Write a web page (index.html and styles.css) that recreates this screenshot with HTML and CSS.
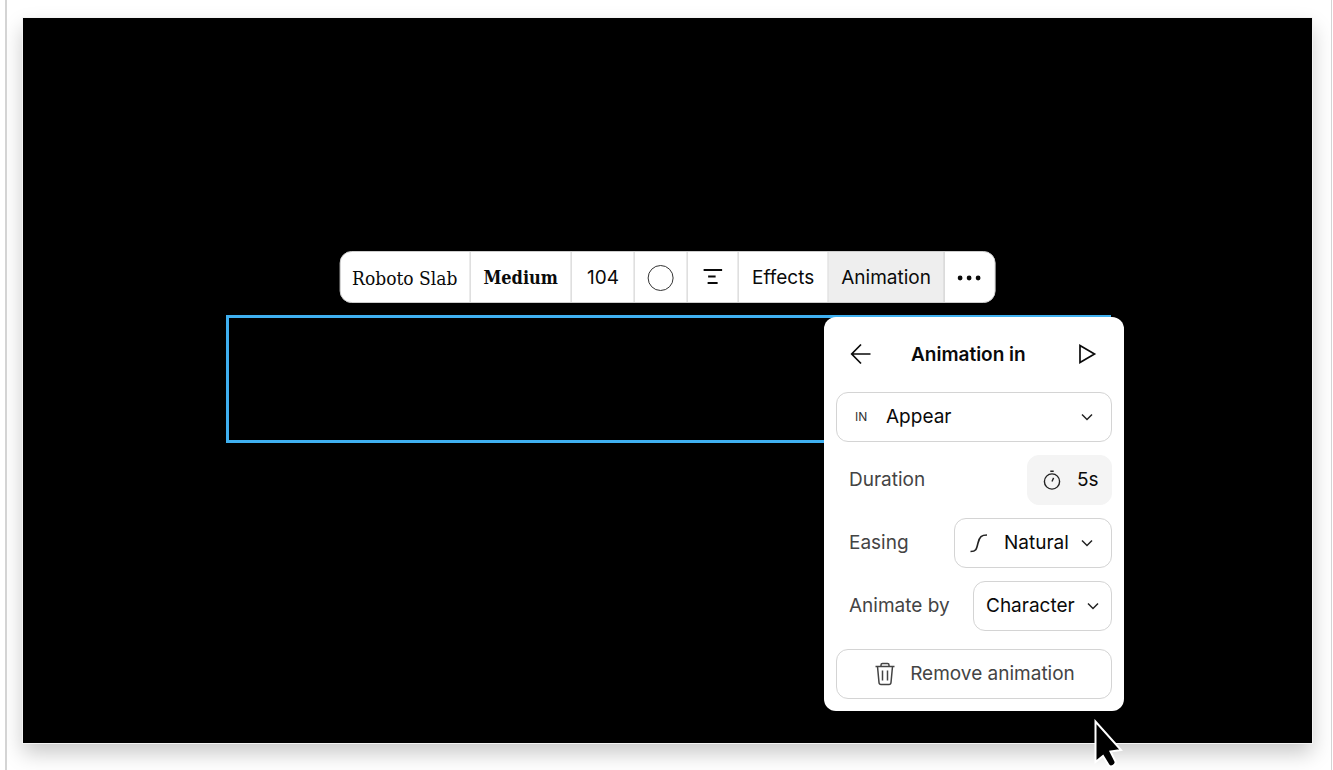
FILE: index.html
```html
<!DOCTYPE html>
<html lang="en">
<head>
<meta charset="utf-8">
<title>Animation editor</title>
<link rel="stylesheet" href="styles.css">
</head>
<body>
<main class="workspace">
  <section class="stage" aria-label="Canvas">
    <div class="selection"></div>

    <div class="toolbar" role="toolbar" aria-label="Text options">
      <button class="tool slab" type="button">Roboto Slab</button>
      <button class="tool slab medium" type="button">Medium</button>
      <button class="tool size" type="button">104</button>
      <button class="tool" type="button" aria-label="Text color"><span class="swatch"></span></button>
      <button class="tool" type="button" aria-label="Align">
        <svg width="24" height="24" viewBox="0 0 24 24" fill="none" stroke="currentColor" stroke-width="1.900"><path d="M3 4h18.500M7.500 10.500h7.500M7 17h10"/></svg>
      </button>
      <button class="tool" type="button">Effects</button>
      <button class="tool active" type="button">Animation</button>
      <button class="tool" type="button" aria-label="More">
        <svg width="26" height="24" viewBox="0 0 26 24" fill="currentColor"><circle cx="3.500" cy="12" r="2.400"/><circle cx="12.500" cy="12" r="2.400"/><circle cx="21.500" cy="12" r="2.400"/></svg>
      </button>
    </div>

    <form class="panel">
      <header class="panel-head">
        <button class="icon-button" type="button" aria-label="Back">
          <svg width="24" height="24" viewBox="0 0 24 24" fill="none" stroke="currentColor" stroke-width="1.700"><path d="M21.500 12H3M12 2.500L2.700 12l9.300 9.500"/></svg>
        </button>
        <h2 class="panel-title">Animation in</h2>
        <button class="icon-button" type="button" aria-label="Play">
          <svg width="24" height="24" viewBox="0 0 24 24" fill="none" stroke="currentColor" stroke-width="1.700"><path d="M5 3.500v17l14.500-8.500z"/></svg>
        </button>
      </header>

      <div class="field field-wide">
        <span class="in-tag">IN</span>
        <select class="select" aria-label="Animation"><option>Appear</option></select>
        <svg class="chevron" width="12" height="12" viewBox="0 0 12 12"><path d="M1 3.500l5 5 5-5"/></svg>
      </div>

      <div class="row">
        <label class="label" for="duration">Duration</label>
        <div class="field field-duration">
          <svg width="24" height="24" viewBox="0 0 24 24" fill="none" stroke="#222" stroke-width="1.400"><circle cx="12" cy="13.500" r="7.600"/><path d="M10.300 3.300h3.400M12 13.500l1.600-3.600"/></svg>
          <input class="duration" id="duration" type="text" value="5s">
        </div>
      </div>

      <div class="row">
        <label class="label" for="easing">Easing</label>
        <div class="field">
          <svg class="curve" width="24" height="24" viewBox="0 0 24 24" fill="none" stroke="#222" stroke-width="1.600"><path d="M3.500 20.500c5.500 0 6-2 7.500-8.500C12.500 5.500 14.500 4 20 4"/></svg>
          <select class="select" id="easing"><option>Natural</option></select>
          <svg class="chevron" width="12" height="12" viewBox="0 0 12 12"><path d="M1 3.500l5 5 5-5"/></svg>
        </div>
      </div>

      <div class="row">
        <label class="label" for="unit">Animate by</label>
        <div class="field field-unit">
          <select class="select" id="unit"><option>Character</option></select>
          <svg class="chevron" width="12" height="12" viewBox="0 0 12 12"><path d="M1 3.500l5 5 5-5"/></svg>
        </div>
      </div>

      <button class="remove" type="button">
        <svg width="24" height="24" viewBox="0 0 24 24" fill="none" stroke="currentColor" stroke-width="1.500"><path d="M2.500 4.500h19M8 4.500V3q0-1.500 1.500-1.500h5Q16 1.500 16 3v1.500M4.500 4.500L6 20.500q.2 2 2 2h8q1.800 0 2-2l1.500-16M9.500 8.500v10M14.500 8.500v10"/></svg>
        Remove animation
      </button>
    </form>

    <svg class="cursor" width="32" height="50" viewBox="0 0 32 50"><path d="M2.500 2.500V43l7.500-6 5.500 9q1.500 2.500 4.500 1t2.500-4.500L17.500 32.500 28 31z" fill="#000" stroke="#fff" stroke-width="2"/></svg>
  </section>
</main>
</body>
</html>
```
FILE: styles.css
```css
* {
  box-sizing: border-box;
}

body {
  margin: 0;
  background: #fff;
  color: #0a0a0a;
  font: 19px/24px Inter, "Liberation Sans", sans-serif;
}

button,
input,
select {
  margin: 0;
  padding: 0;
  border: 0;
  background: none;
  color: inherit;
  font: inherit;
}

.workspace {
  display: flex;
  height: 100vh;
  margin: 0 1px 0 5px;
  padding: 18px 19px 27px 16px;
  border: solid #d4d4d4;
  border-width: 0 1px 0 2px;
  overflow: hidden;
}

.stage {
  position: relative;
  flex: 1;
  background: #000;
  box-shadow: 0 0 0 1px #f4f4f4, 0 10px 20px rgba(0, 0, 0, 0.22);
}

.selection {
  position: absolute;
  top: 297px;
  left: 203px;
  width: 885px;
  height: 128px;
  border: 3px solid #3fb0f0;
}

.toolbar {
  position: absolute;
  top: 233px;
  left: 50%;
  display: flex;
  height: 52px;
  transform: translateX(-50%);
  border: 1px solid #ccc;
  border-radius: 12px;
  background: #fff;
  overflow: hidden;
}

.tool {
  display: flex;
  align-items: center;
  justify-content: center;
  padding: 2px 13px 0;
  border-right: 1px solid #ccc;
  white-space: nowrap;
}

.tool:last-child {
  padding: 2px 12px 0;
  border-right: 0;
}

.slab {
  padding: 2px 12px 0;
  font-family: "Roboto Slab", "DejaVu Serif Condensed", "DejaVu Serif", serif;
  font-size: 19px;
}

.medium {
  padding: 2px 13px 0;
  font-size: 18px;
  font-weight: 700;
}

.size {
  padding: 2px 15px 0;
}

.swatch {
  width: 26px;
  height: 26px;
  border: 1px solid #333;
  border-radius: 50%;
}

.active {
  background: #eee;
}

.panel {
  position: absolute;
  top: 299px;
  left: 801px;
  display: flex;
  flex-direction: column;
  gap: 13px;
  width: 300px;
  padding: 12px;
  border-radius: 12px;
  background: #fff;
}

.panel-head {
  display: flex;
  align-items: center;
  justify-content: space-between;
  height: 50px;
  padding: 0 13px;
}

.panel-title {
  flex: 1;
  margin: 0;
  padding: 1px 0 0 38px;
  font-size: 19px;
  font-weight: 600;
}

.icon-button,
.tool svg,
.field svg {
  display: flex;
  flex: none;
}

.row {
  display: flex;
  align-items: center;
  justify-content: space-between;
}

.label {
  padding-left: 13px;
  color: #444;
}

.field {
  display: flex;
  align-items: center;
  height: 50px;
  padding: 0 18px 0 12px;
  border: 1px solid #d4d4d4;
  border-radius: 12px;
}

.field-unit {
  padding: 0 12px;
}

.select {
  appearance: none;
  margin-right: 12px;
}

.chevron {
  fill: none;
  stroke: #222;
  stroke-width: 1.500;
}

.field-wide .select {
  flex: 1;
}

.in-tag {
  width: 37px;
  padding-left: 6px;
  color: #333;
  font-size: 12px;
}

.field-duration {
  gap: 13px;
  padding: 0 12px;
  border-color: #f4f4f4;
  background: #f4f4f4;
}

.duration {
  width: 22px;
}

.curve {
  margin-right: 13px;
}

.remove {
  display: flex;
  align-items: center;
  justify-content: center;
  gap: 13px;
  height: 50px;
  margin-top: 5px;
  border: 1px solid #d4d4d4;
  border-radius: 12px;
  color: #444;
}

.cursor {
  position: absolute;
  top: 701px;
  left: 1070px;
}
```
